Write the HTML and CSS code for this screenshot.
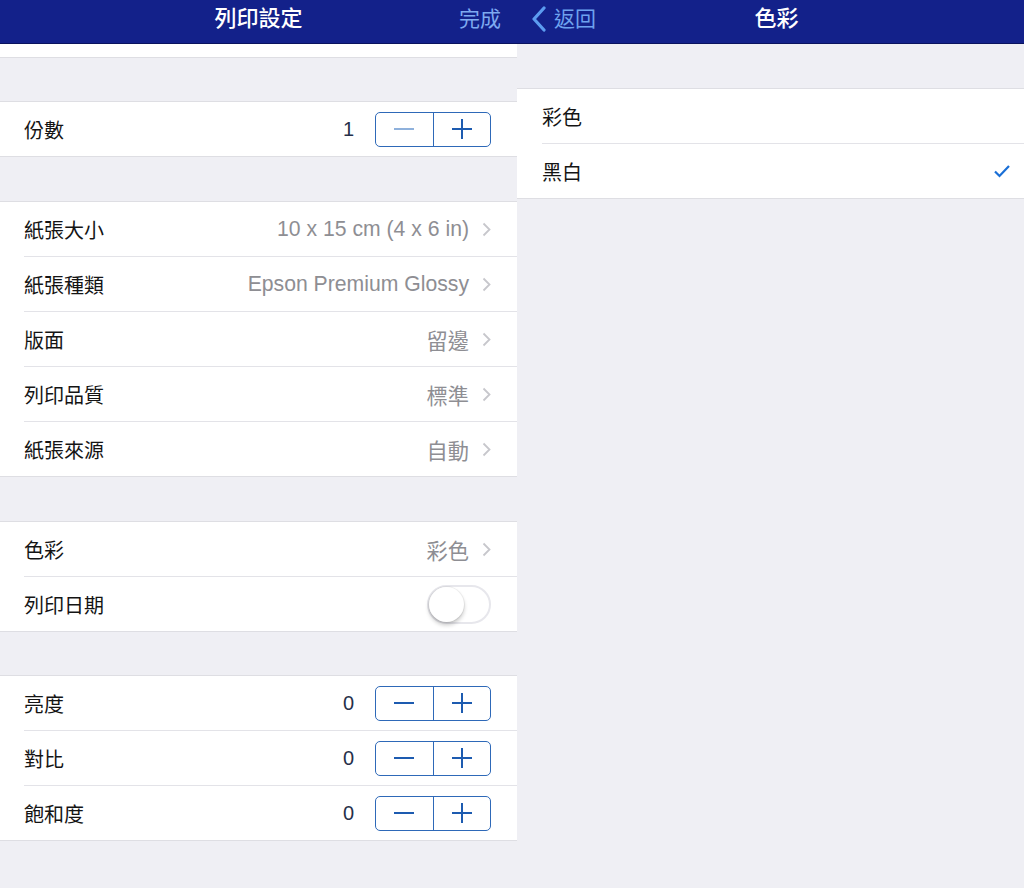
FILE: index.html
```html
<!DOCTYPE html>
<html lang="zh-Hant">
<head>
    <meta charset="UTF-8">
    <meta name="viewport" content="width=device-width, initial-scale=1.0">
    <title>列印設定</title>
    <link rel="stylesheet" href="styles.css">
</head>
<body>

<div class="screen">
    <!-- Painel esquerdo: configurações de impressão -->
    <div class="panel panel-left">
        <div class="navbar">
            <div class="nav-side"></div>
            <div class="nav-title">列印設定</div>
            <div class="nav-side nav-right"><span class="nav-link">完成</span></div>
        </div>

        <div class="stub"></div>

        <div class="group">
            <div class="row"><div class="row-inner">
                <span class="label">份數</span>
                <span class="num">1</span>
                <div class="stepper">
                    <span class="step minus disabled"></span>
                    <span class="step plus"></span>
                </div>
            </div></div>
        </div>

        <div class="group">
            <div class="row"><div class="row-inner">
                <span class="label">紙張大小</span>
                <span class="value">10 x 15 cm (4 x 6 in)</span>
                <svg class="chev" width="9" height="15" viewBox="0 0 9 15"><path d="M1.5 1.5 L7.5 7.5 L1.5 13.5" fill="none" stroke="#c7c7cc" stroke-width="1.8"/></svg>
            </div></div>
            <div class="row"><div class="row-inner">
                <span class="label">紙張種類</span>
                <span class="value">Epson Premium Glossy</span>
                <svg class="chev" width="9" height="15" viewBox="0 0 9 15"><path d="M1.5 1.5 L7.5 7.5 L1.5 13.5" fill="none" stroke="#c7c7cc" stroke-width="1.8"/></svg>
            </div></div>
            <div class="row"><div class="row-inner">
                <span class="label">版面</span>
                <span class="value">留邊</span>
                <svg class="chev" width="9" height="15" viewBox="0 0 9 15"><path d="M1.5 1.5 L7.5 7.5 L1.5 13.5" fill="none" stroke="#c7c7cc" stroke-width="1.8"/></svg>
            </div></div>
            <div class="row"><div class="row-inner">
                <span class="label">列印品質</span>
                <span class="value">標準</span>
                <svg class="chev" width="9" height="15" viewBox="0 0 9 15"><path d="M1.5 1.5 L7.5 7.5 L1.5 13.5" fill="none" stroke="#c7c7cc" stroke-width="1.8"/></svg>
            </div></div>
            <div class="row"><div class="row-inner">
                <span class="label">紙張來源</span>
                <span class="value">自動</span>
                <svg class="chev" width="9" height="15" viewBox="0 0 9 15"><path d="M1.5 1.5 L7.5 7.5 L1.5 13.5" fill="none" stroke="#c7c7cc" stroke-width="1.8"/></svg>
            </div></div>
        </div>

        <div class="group">
            <div class="row"><div class="row-inner">
                <span class="label">色彩</span>
                <span class="value">彩色</span>
                <svg class="chev" width="9" height="15" viewBox="0 0 9 15"><path d="M1.5 1.5 L7.5 7.5 L1.5 13.5" fill="none" stroke="#c7c7cc" stroke-width="1.8"/></svg>
            </div></div>
            <div class="row"><div class="row-inner">
                <span class="label">列印日期</span>
                <div class="switch"><div class="knob"></div></div>
            </div></div>
        </div>

        <div class="group group-last">
            <div class="row"><div class="row-inner">
                <span class="label">亮度</span>
                <span class="num">0</span>
                <div class="stepper">
                    <span class="step minus"></span>
                    <span class="step plus"></span>
                </div>
            </div></div>
            <div class="row"><div class="row-inner">
                <span class="label">對比</span>
                <span class="num">0</span>
                <div class="stepper">
                    <span class="step minus"></span>
                    <span class="step plus"></span>
                </div>
            </div></div>
            <div class="row"><div class="row-inner">
                <span class="label">飽和度</span>
                <span class="num">0</span>
                <div class="stepper">
                    <span class="step minus"></span>
                    <span class="step plus"></span>
                </div>
            </div></div>
        </div>
    </div>

    <!-- Painel direito: escolha de cor -->
    <div class="panel panel-right">
        <div class="navbar">
            <div class="nav-side">
                <span class="nav-link back">
                    <svg width="16" height="26" viewBox="0 0 16 26"><path d="M13 2 L3 13 L13 24" fill="none" stroke="#5c9cf0" stroke-width="3.2" stroke-linecap="round" stroke-linejoin="round"/></svg>
                    返回
                </span>
            </div>
            <div class="nav-title">色彩</div>
            <div class="nav-side"></div>
        </div>

        <div class="group">
            <div class="row"><div class="row-inner">
                <span class="label">彩色</span>
            </div></div>
            <div class="row"><div class="row-inner">
                <span class="label">黑白</span>
                <svg class="check" width="18" height="14" viewBox="0 0 18 14"><path d="M2 7.5 L6.5 12 L16 2" fill="none" stroke="#1a6fd6" stroke-width="2.2"/></svg>
            </div></div>
        </div>
    </div>
</div>

</body>
</html>
```

FILE: styles.css
```css
body {
    margin: 0;
    background-color: #efeff4; /* fundo cinza do iOS */
    font-family: "Liberation Sans", "Noto Sans CJK TC", sans-serif;
    color: #111111;
}
.screen {
    display: flex;
    width: 1024px;
    height: 888px;
    overflow: hidden;
}
.panel {
    display: flex;
    flex-direction: column;
}
.panel-left {
    width: 517px;
}
.panel-right {
    flex: 1;
}

/* Barra de navegação */
.navbar {
    height: 43px;
    border-bottom: 1px solid #0a135e;
    background-color: #13218a;
    display: grid;
    grid-template-columns: 1fr auto 1fr;
    align-items: center;
}
.nav-title {
    color: #ffffff;
    font-size: 22px;
    font-weight: 500;
    line-height: 36px;
    margin-top: -6px;
}
.panel-right .nav-title {
    padding-left: 12px;
}
.nav-side {
    display: flex;
}
.nav-right {
    justify-content: flex-end;
    padding-right: 16px;
}
.nav-link {
    color: #7eaaf0;
    font-size: 21px;
    line-height: 36px;
    margin-top: -6px;
    display: flex;
    align-items: center;
}
.back {
    padding-left: 14px;
    color: #6ea2ee;
}
.back svg {
    margin-right: 7px;
}

/* Linha cortada no topo da lista */
.stub {
    height: 13px;
    background-color: #ffffff;
    border-bottom: 1px solid #dedee3;
}

/* Grupos e linhas */
.group {
    margin-top: 44px;
    background-color: #ffffff;
    border-top: 1px solid #dedee3;
    border-bottom: 1px solid #dedee3;
}
.stub + .group {
    margin-top: 43px;
}
.group + .group {
    margin-top: 44px;
}
.group-last {
    margin-top: 43px !important;
}
.row {
    padding-left: 24px;
}
.panel-right .row {
    padding-left: 25px;
}
.row-inner {
    height: 54px;
    display: flex;
    align-items: center;
    padding-right: 26px;
    border-bottom: 1px solid #e3e3e8;
}
.panel-right .row-inner {
    padding-right: 13px;
}
.row:last-child .row-inner {
    border-bottom: none;
}
.label {
    flex: 1;
    font-family: "Noto Sans CJK TC", sans-serif;
    font-size: 20px;
    color: #141414;
}
.value {
    font-size: 21.2px;
    color: #8e8e93;
    margin-right: 13px;
}
.chev {
    display: block;
}
.num {
    font-size: 20px;
    color: #26304a;
    margin-right: 21px;
}

/* Stepper - + */
.stepper {
    display: flex;
    width: 114px;
    height: 33px;
    border: 1.5px solid #2e69b8;
    border-radius: 5px;
}
.step {
    flex: 1;
    position: relative;
}
.step + .step {
    border-left: 1.5px solid #2e69b8;
}
.step::before,
.plus::after {
    content: "";
    position: absolute;
    width: 20px;
    height: 2px;
    background-color: #1d5bb0;
    left: 50%;
    top: 50%;
    margin-left: -10px;
    margin-top: -1px;
}
.plus::after {
    width: 2px;
    height: 20px;
    margin-left: -1px;
    margin-top: -10px;
}
.minus.disabled::before {
    background-color: #8fb1dc;
}

/* Interruptor desligado */
.switch {
    width: 60px;
    height: 35px;
    border: 2px solid #e7e7ec;
    border-radius: 20px;
    background-color: #ffffff;
    display: flex;
    align-items: center;
}
.knob {
    width: 35px;
    height: 35px;
    border-radius: 50%;
    background-color: #ffffff;
    box-shadow: 0 3px 4px rgba(0, 0, 0, 0.22), 0 0 0 1px rgba(0, 0, 0, 0.05);
}

.check {
    display: block;
}
```
